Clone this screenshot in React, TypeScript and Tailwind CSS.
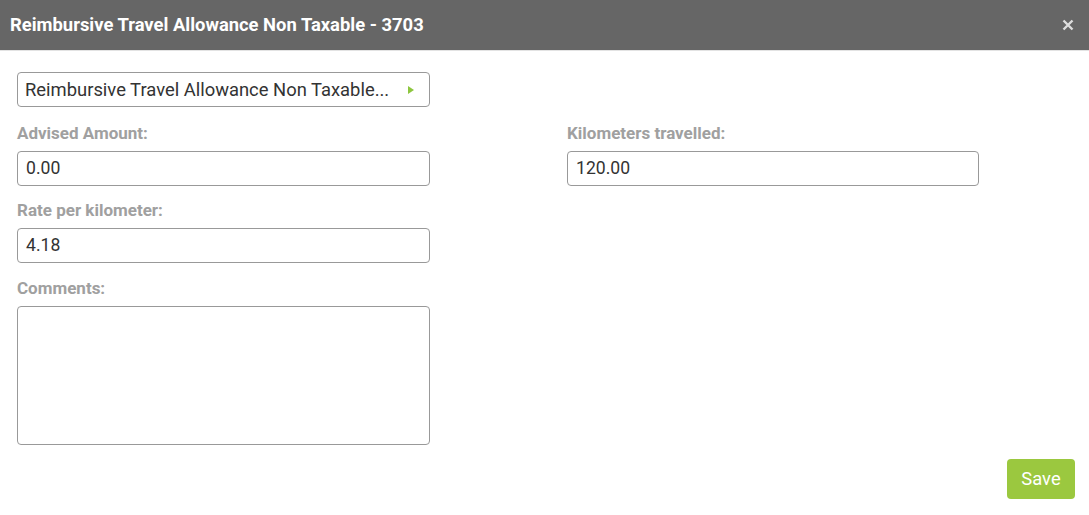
import type { ReactNode } from "react";

function Field({ label, children, gap }: { label: string; children: ReactNode; gap: string }) {
  return (
    <div className={gap}>
      <div className="mb-[8px] h-[20px] text-[17px] leading-[20px] font-bold text-[#a0a0a0]">{label}</div>
      {children}
    </div>
  );
}

function TextBox({ value }: { value: string }) {
  return (
    <div className="flex h-[35px] w-full items-center rounded-[4px] border border-[#999999] bg-white px-[8px] text-[17.6px] text-[#333333]">
      {value}
    </div>
  );
}

export default function App() {
  return (
    <div className="flex h-[515px] w-[1089px] flex-col bg-white font-['Roboto','Liberation_Sans',sans-serif]">
      <header className="flex h-[51px] shrink-0 items-center justify-between border-b border-[#e3e3e3] bg-[#666666] pl-[10px] pr-[15px]">
        <h1 className="text-[18.4px] font-bold text-white">Reimbursive Travel Allowance Non Taxable - 3703</h1>
        <button className="text-[#dddddd]" aria-label="Close">
          <svg width="12" height="12" viewBox="0 0 12 12">
            <path d="M1.5 1.5 L10.5 10.5 M10.5 1.5 L1.5 10.5" stroke="currentColor" strokeWidth="2.4" />
          </svg>
        </button>
      </header>

      <div className="flex flex-1 flex-col px-[17px] pt-[21px]">
        <div className="flex h-[35px] w-[413px] items-center justify-between rounded-[4px] border border-[#999999] pl-[7px] pr-[8px] text-[18.4px] text-[#333333]">
          <span className="whitespace-nowrap pt-[1px]">Reimbursive Travel Allowance Non Taxable...</span>
          <svg width="6" height="8" viewBox="0 0 6 8" className="mr-[7px] shrink-0">
            <path d="M0 0 L6 4 L0 8 Z" fill="#8dc63f" />
          </svg>
        </div>

        <div className="grid grid-cols-[413px_412px] gap-x-[137px]">
          <div>
            <Field label="Advised Amount:" gap="mt-[16px]">
              <TextBox value="0.00" />
            </Field>
            <Field label="Rate per kilometer:" gap="mt-[14px]">
              <TextBox value="4.18" />
            </Field>
            <Field label="Comments:" gap="mt-[15px]">
              <div className="h-[139px] w-full rounded-[4px] border border-[#999999]" />
            </Field>
          </div>
          <div>
            <Field label="Kilometers travelled:" gap="mt-[16px]">
              <TextBox value="120.00" />
            </Field>
          </div>
        </div>

        <div className="mt-[14px] flex justify-end">
          <button className="mr-[-3px] h-[40px] w-[68px] rounded-[4px] bg-[#9bc83f] text-[18.4px] text-white">Save</button>
        </div>
      </div>
    </div>
  );
}
